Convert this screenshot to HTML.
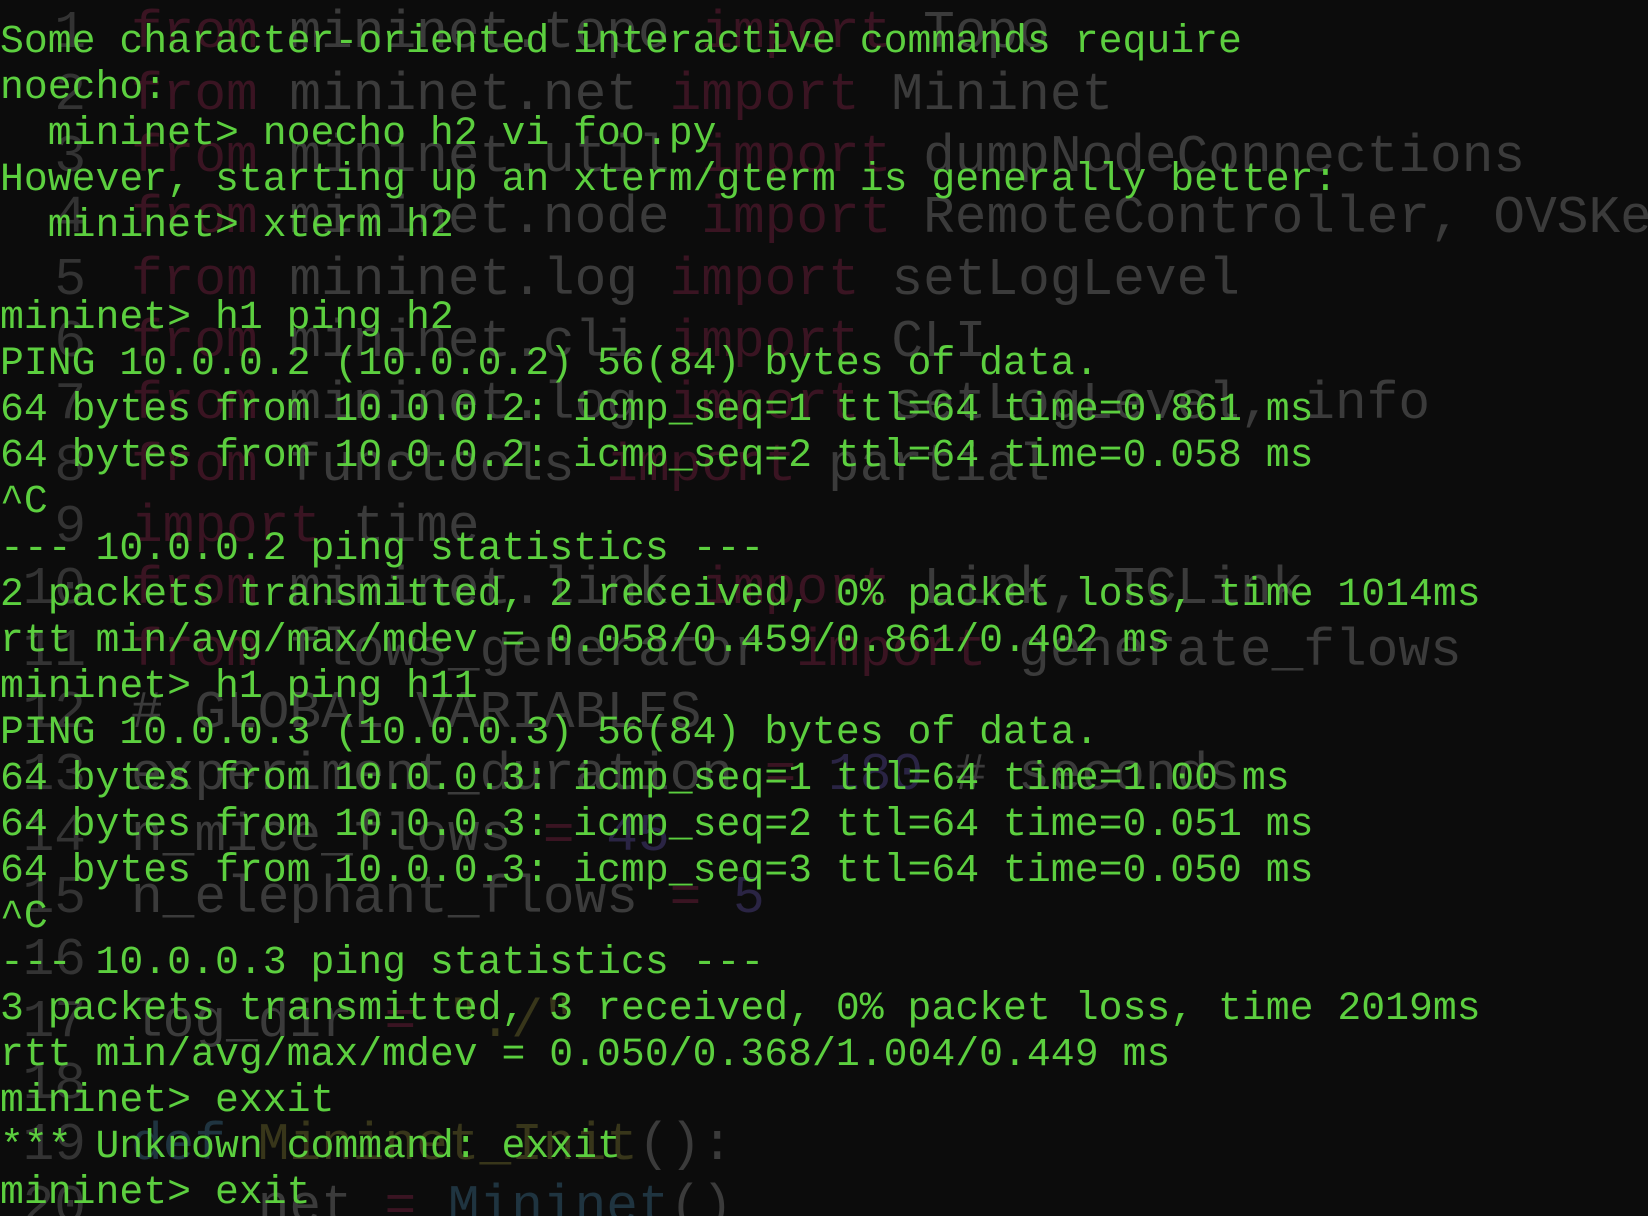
<!DOCTYPE html>
<html><head><meta charset="utf-8"><style>
html,body{margin:0;padding:0;background:#0c0c0c;width:1648px;height:1216px;overflow:hidden;position:relative}
.bg{position:absolute;left:0;top:3px;width:1648px;height:1213px;overflow:hidden;font-family:"Liberation Mono",monospace;font-size:52.8px;line-height:61.8px;color:#3b3b3b;white-space:pre}
.bg div{height:61.8px}
.n{display:inline-block;width:86px;text-align:right;margin-right:45px;color:#333}
.k{color:#3a1422}
.p{color:#2a2444}
.f{color:#38361a}
.t{color:#1f3440}
.fg{position:absolute;left:0;top:19px;font-family:"Liberation Mono",monospace;font-size:39.8px;line-height:46.05px;color:#5ccf3f;white-space:pre}
</style></head><body>
<div class="bg"><div><span class="n">1</span><span class="k">from</span> mininet.topo <span class="k">import</span> Topo</div><div><span class="n">2</span><span class="k">from</span> mininet.net <span class="k">import</span> Mininet</div><div><span class="n">3</span><span class="k">from</span> mininet.util <span class="k">import</span> dumpNodeConnections</div><div><span class="n">4</span><span class="k">from</span> mininet.node <span class="k">import</span> RemoteController, OVSKernelSwitch</div><div><span class="n">5</span><span class="k">from</span> mininet.log <span class="k">import</span> setLogLevel</div><div><span class="n">6</span><span class="k">from</span> mininet.cli <span class="k">import</span> CLI</div><div><span class="n">7</span><span class="k">from</span> mininet.log <span class="k">import</span> setLogLevel, info</div><div><span class="n">8</span><span class="k">from</span> functools <span class="k">import</span> partial</div><div><span class="n">9</span><span class="k">import</span> time</div><div><span class="n">10</span><span class="k">from</span> mininet.link <span class="k">import</span> Link, TCLink</div><div><span class="n">11</span><span class="k">from</span> flows_generator <span class="k">import</span> generate_flows</div><div><span class="n">12</span># GLOBAL VARIABLES</div><div><span class="n">13</span>experiment_duration <span class="k">=</span> <span class="p">180</span> # seconds</div><div><span class="n">14</span>n_mice_flows <span class="k">=</span> <span class="p">45</span></div><div><span class="n">15</span>n_elephant_flows <span class="k">=</span> <span class="p">5</span></div><div><span class="n">16</span></div><div><span class="n">17</span>log_dir <span class="k">=</span> <span class="f">"./"</span></div><div><span class="n">18</span></div><div><span class="n">19</span><span class="t">def</span> <span class="f">Mininet_Init</span>():</div><div><span class="n">20</span>    net <span class="k">=</span> <span class="t">Mininet</span>()</div></div>
<div class="fg">Some character-oriented interactive commands require
noecho:
  mininet&gt; noecho h2 vi foo.py
However, starting up an xterm/gterm is generally better:
  mininet&gt; xterm h2

mininet&gt; h1 ping h2
PING 10.0.0.2 (10.0.0.2) 56(84) bytes of data.
64 bytes from 10.0.0.2: icmp_seq=1 ttl=64 time=0.861 ms
64 bytes from 10.0.0.2: icmp_seq=2 ttl=64 time=0.058 ms
^C
--- 10.0.0.2 ping statistics ---
2 packets transmitted, 2 received, 0% packet loss, time 1014ms
rtt min/avg/max/mdev = 0.058/0.459/0.861/0.402 ms
mininet&gt; h1 ping h11
PING 10.0.0.3 (10.0.0.3) 56(84) bytes of data.
64 bytes from 10.0.0.3: icmp_seq=1 ttl=64 time=1.00 ms
64 bytes from 10.0.0.3: icmp_seq=2 ttl=64 time=0.051 ms
64 bytes from 10.0.0.3: icmp_seq=3 ttl=64 time=0.050 ms
^C
--- 10.0.0.3 ping statistics ---
3 packets transmitted, 3 received, 0% packet loss, time 2019ms
rtt min/avg/max/mdev = 0.050/0.368/1.004/0.449 ms
mininet&gt; exxit
*** Unknown command: exxit
mininet&gt; exit</div>
</body></html>
